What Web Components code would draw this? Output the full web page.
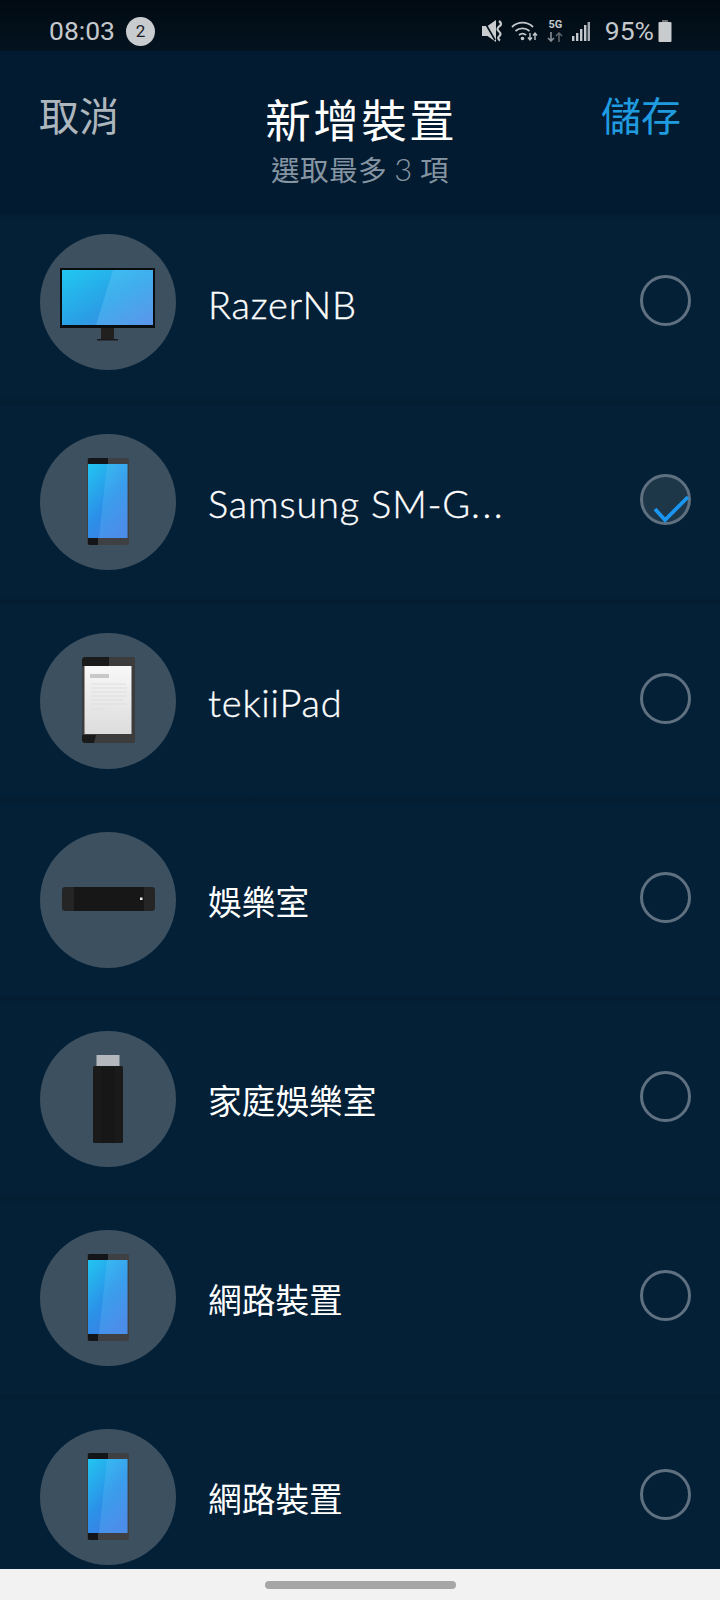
<!DOCTYPE html>
<html lang="zh-Hant"><head><meta charset="utf-8">
<style>
html,body{margin:0;padding:0;background:#042037}
body{width:720px;height:1600px;overflow:hidden;font-family:"Lato","Noto Sans CJK TC",sans-serif}
app-screen{display:flex}
</style></head><body>
<app-screen>
<status-bar></status-bar>
<top-header></top-header>
<device-list>
<device-row first kind="monitor" name="RazerNB"></device-row>
<device-row kind="phone" name="Samsung SM-G..." checked></device-row>
<device-row kind="tablet" name="tekiiPad"></device-row>
<device-row kind="box" name="娛樂室"></device-row>
<device-row kind="stick" name="家庭娛樂室"></device-row>
<device-row kind="phone" name="網路裝置"></device-row>
<device-row kind="phone" name="網路裝置"></device-row>
</device-list>
<nav-bar></nav-bar>
</app-screen>
<script>
function def(name, html){
  customElements.define(name, class extends HTMLElement{
    connectedCallback(){
      if(this.shadowRoot) return;
      const r=this.attachShadow({mode:'open'});
      r.innerHTML=typeof html==='function'?html(this):html;
    }
  });
}
def('app-screen',`<style>:host{display:flex;flex-direction:column;width:720px;height:1600px;overflow:hidden}</style><slot></slot>`);
def('status-bar',`<style>
:host{display:flex;align-items:center;height:51px;flex:none;box-sizing:border-box;padding:11px 48px 0 49px;background:linear-gradient(#010a12,#03131f);color:#c4c8cc;font:26.5px/1 Roboto,sans-serif}
.b{width:29px;height:29px;border-radius:50%;background:#c9cccf;color:#1a2026;font-size:17px;display:flex;align-items:center;justify-content:center;margin:0 0 0 11px}
.r{margin-left:auto;display:flex;align-items:center}
svg{display:block}
</style>
<span>08:03</span><span class="b">2</span>
<div class="r">
<svg width="21" height="22" viewBox="0 0 21 22" style="margin-right:8px"><path d="M0 6h5.500L14 0v22L5.500 16H0z" fill="#c9cccf"/><path d="M2 1l11 19" stroke="#03131f" stroke-width="1.600"/><path d="M17 1q4 3 0 5.500q-3 2.500 0 5q3 2.500 0 5q-2 2 1 4" fill="none" stroke="#c9cccf" stroke-width="2.200"/></svg>
<svg width="27" height="22" viewBox="0 0 27 22" style="margin-right:10px"><g fill="none" stroke="#c4c8cc" stroke-width="1.800"><path d="M1 7a15 15 0 0 1 21 0"/><path d="M4.500 11a10.500 10.500 0 0 1 14 0"/><path d="M8 15a5.500 5.500 0 0 1 7 0"/></g><circle cx="11.500" cy="18.500" r="1.800" fill="#c4c8cc"/><path d="M19 13v7M17 17.500l2 2.500 2-2.500M24 20v-7M22 15.500l2-2.500 2 2.500" fill="none" stroke="#c4c8cc" stroke-width="1.400"/></svg>
<div style="width:15px;margin-right:9px;display:flex;flex-direction:column;align-items:center"><span style="font:700 11px/10px Roboto,sans-serif;letter-spacing:-.2px;color:#c4c8cc">5G</span><svg width="16" height="10" viewBox="0 0 16 10" style="margin-top:2px"><path d="M4 0v9M1 6l3 3 3-3" fill="none" stroke="#8a8f94" stroke-width="1.600"/><path d="M12 10V1M9 4l3-3 3 3" fill="none" stroke="#5e6469" stroke-width="1.600"/></svg></div>
<svg width="18" height="19" viewBox="0 0 18 19" style="margin-right:15px"><g fill="#c4c8cc"><rect x="0" y="14" width="2.400" height="5"/><rect x="4" y="11" width="2.400" height="8"/><rect x="8" y="7" width="2.400" height="12"/><rect x="12" y="3" width="2.400" height="16"/><rect x="15.600" y="0" width="2.400" height="19" opacity=".85"/></g></svg>
<span>95%</span>
<svg width="14" height="22" viewBox="0 0 14 22" style="margin-left:4px"><path d="M4.500 0h5v2h3a1 1 0 0 1 1 1v18a1 1 0 0 1-1 1H1.500a1 1 0 0 1-1-1V3a1 1 0 0 1 1-1h3z" fill="#c9cccf"/><rect x="4.500" y="0" width="5" height="2" fill="#6e7276"/></svg>
</div>`);
def('top-header',`<style>
:host{display:grid;grid-template-columns:1fr auto 1fr;height:163px;flex:none;box-sizing:border-box;padding:0 39px;background:#021b30;font-family:"Noto Sans CJK TC",sans-serif}
.l,.s{font-size:40px;line-height:56px;padding-top:35px}
.l{color:#aeb6bd}.s{color:#1f9be0;text-align:right}
.c{display:flex;flex-direction:column;align-items:center;padding-top:38px}
.t{color:#fff;font-size:45.500px;line-height:58px;letter-spacing:2.500px;font-weight:400;margin-right:-2.500px}
.u{color:#8695a2;font-size:28.500px;line-height:36px;margin-top:3px;letter-spacing:.6px;white-space:pre}
.u b{font:300 31px "Lato",sans-serif}
</style>
<div class="l">取消</div><div class="c"><div class="t">新增裝置</div><div class="u">選取最多 <b>3</b> 項</div></div><div class="s">儲存</div>`);
def('device-list',`<style>:host{display:flex;flex-direction:column;flex:1;min-height:0;overflow:hidden}</style><slot></slot>`);
const icons={
monitor:`<svg style="margin-top:4px" width="96" height="73" viewBox="0 0 96 73"><defs><linearGradient id="g" x1="0" y1="0" x2="1" y2="1"><stop offset="0" stop-color="#20c8ef"/><stop offset=".55" stop-color="#2a9fe6"/><stop offset="1" stop-color="#4f7de2"/></linearGradient></defs><rect x="0" y="0" width="95" height="60" fill="#0a0d10"/><rect x="2" y="2" width="91" height="55" fill="url(#g)"/><path d="M53 2h40v55H36z" fill="#7fd4ff" opacity=".28"/><rect x="41" y="60" width="13" height="12" fill="#221f1f"/><rect x="37" y="71" width="21" height="1.500" fill="#1a1818"/></svg>`,
phone:`<svg style="margin-bottom:1px" width="42" height="87" viewBox="0 0 42 87"><defs><linearGradient id="p" x1="0" y1="0" x2=".6" y2="1"><stop offset="0" stop-color="#22c5f0"/><stop offset=".6" stop-color="#2b90e8"/><stop offset="1" stop-color="#3f7ee4"/></linearGradient></defs><rect width="42" height="87" rx="2" fill="#3e4044"/><path d="M2 0h19v6H1V1zM1 80h10v7H2l-1-1z" fill="#141518"/><rect x="1" y="6" width="39.500" height="74" fill="url(#p)"/><path d="M20 6h20.500v74H12z" fill="#7fd4ff" opacity=".2"/></svg>`,
tablet:`<svg style="margin-bottom:2px" width="53" height="86" viewBox="0 0 53 86"><defs><linearGradient id="t" x1="0" y1="0" x2="0" y2="1"><stop offset="0" stop-color="#f8f8f8"/><stop offset="1" stop-color="#dcdcdc"/></linearGradient></defs><rect width="53" height="86" rx="2" fill="#3c3c3c"/><path d="M2 0h25v9H0V2zM0 78h14l-2 8H2l-2-2z" fill="#1a1a1a"/><rect x="2.500" y="9" width="47" height="68" fill="url(#t)"/><rect x="8" y="17" width="19" height="4" fill="#c8c8c8"/><g stroke="#dedede" stroke-width="1"><path d="M9 27h35M9 31h36M9 35h36M9 39h36M9 43h32M9 47h36M9 52h14"/></g></svg>`,
box:`<svg style="margin:0 0 1px 0" width="93" height="24" viewBox="0 0 93 24"><rect width="93" height="24" rx="3" fill="#252525"/><rect x="12" y="0" width="70" height="24" fill="#171717"/><rect x="78" y="10.500" width="2.500" height="2.500" fill="#eee"/></svg>`,
stick:`<svg width="30" height="88" viewBox="0 0 30 88"><rect x="3.500" y="0" width="23" height="12" fill="#b4b8bc"/><rect x="0" y="11" width="30" height="77" rx="1.500" fill="#1a1a1a"/><rect x="8" y="12" width="14" height="76" fill="#171717"/></svg>`
};
def('device-row',h=>{
const name=h.getAttribute('name'), cjk=/[\u4e00-\u9fff]/.test(name), on=h.hasAttribute('checked');
const label=name.replace(/\.\.\.$/,'<span style="letter-spacing:2.500px">...</span>');
return `<style>
:host{display:flex;align-items:center;height:199px;flex:none;box-sizing:border-box;padding-left:40px;background:linear-gradient(#031c30,#042037 5px,#042037 calc(100% - 5px),#031c30);color:#fff}
:host([first]){height:188px;padding-bottom:12px}
.c{width:136px;height:136px;border-radius:50%;background:#3c5060;display:flex;align-items:center;justify-content:center;flex:none}
svg{display:block}
.n{margin-left:32px;padding-top:3px;white-space:nowrap;line-height:1}
.lat{font:300 38px/1 "Lato",sans-serif;letter-spacing:.8px;-webkit-text-stroke:.35px #fff}
.cj{font:400 33.700px/1 "Noto Sans CJK TC",sans-serif}
.o{margin:0 29px 4px auto;width:51px;height:51px;box-sizing:border-box;border:3px solid #5f7080;border-radius:50%;position:relative;flex:none}
.on{background:#1d3648}
.o svg{position:absolute;left:10px;top:18px;overflow:visible}
</style>
<div class="c">${icons[h.getAttribute('kind')]}</div><div class="n ${cjk?'cj':'lat'}">${label}</div>
<div class="o ${on?'on':''}">${on?'<svg width="38" height="28" viewBox="0 0 38 28"><path d="M2 14L12 25L35 2" fill="none" stroke="#1a96f0" stroke-width="3.800"/></svg>':''}</div>`;
});
def('nav-bar',`<style>:host{display:flex;align-items:center;justify-content:center;height:31px;flex:none;background:#f2f2f2}i{display:block;width:191px;height:8px;border-radius:4px;background:#a6a6a6}</style><i></i>`);
</script>
</body></html>
